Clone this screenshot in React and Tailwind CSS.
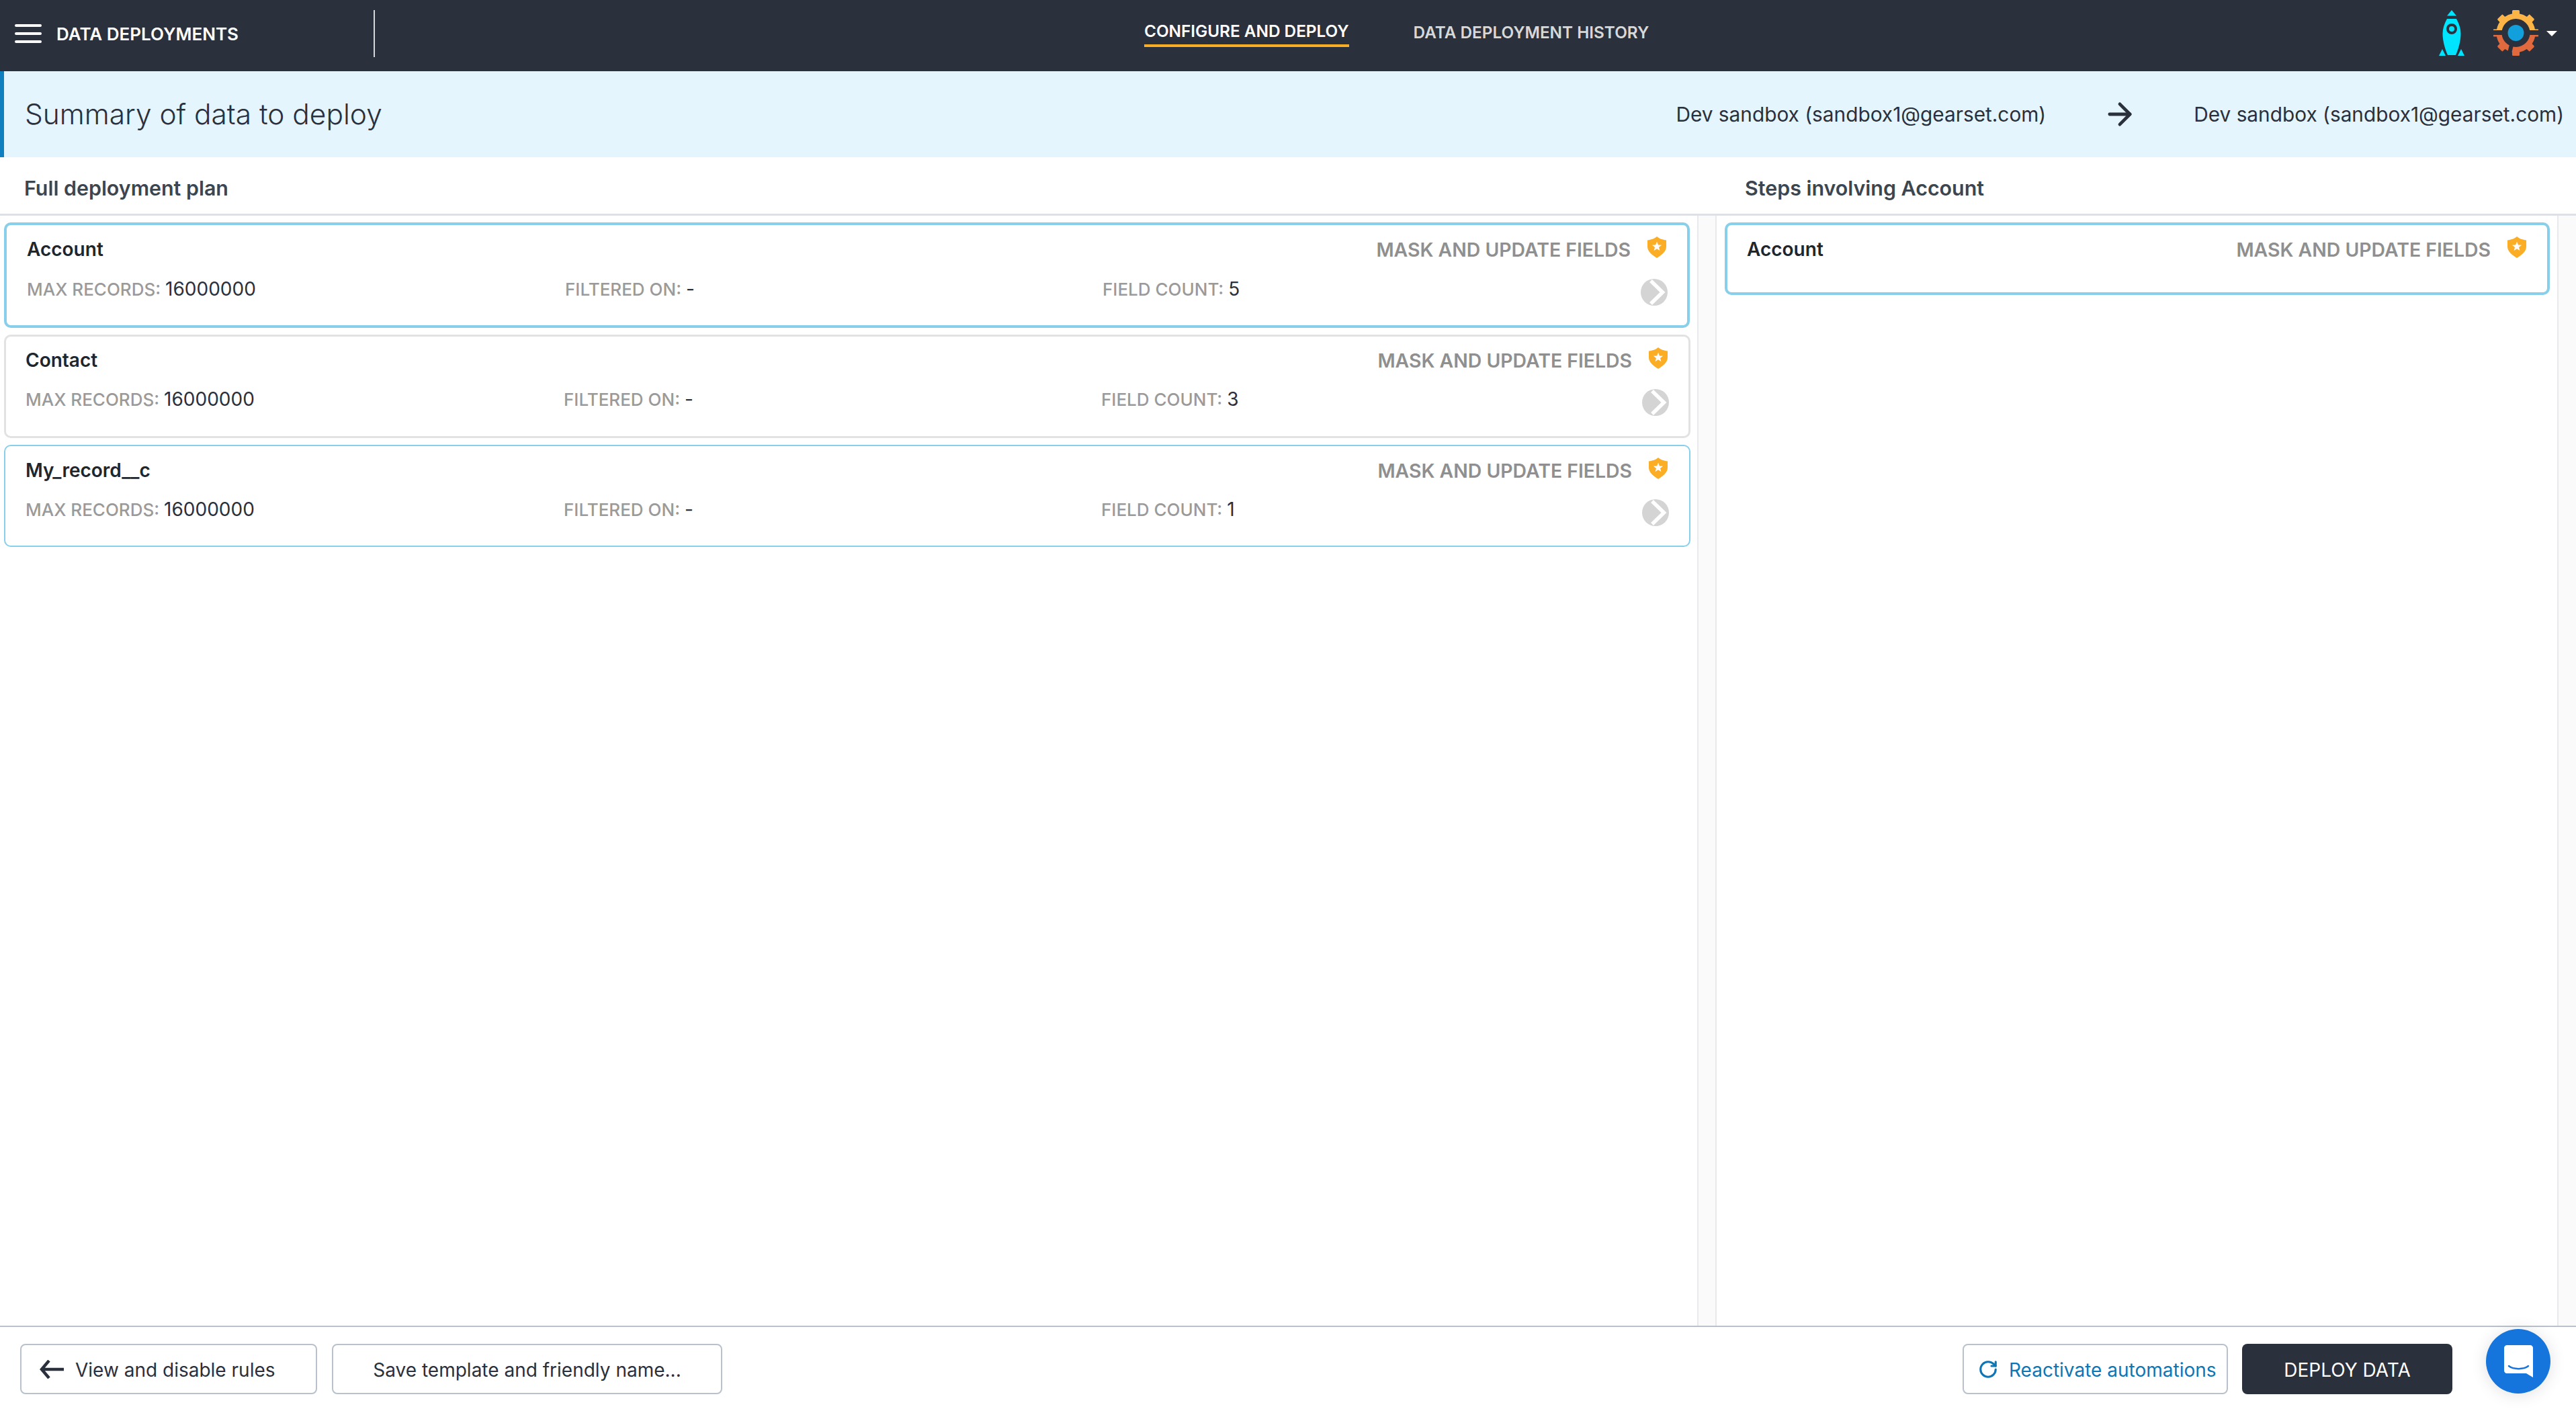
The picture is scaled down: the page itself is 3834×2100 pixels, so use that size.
import { ArrowRight, RotateCw } from 'lucide-react';

const steps = [
  { name: 'Account', count: 5, card: 'h-[157px] border-4 border-[#88cfec] pl-[30px] pr-[31px] pt-[16px]', row: 'mt-[16px]' },
  { name: 'Contact', count: 3, card: 'h-[154px] border-[3px] border-[#e2e2e2] pl-[29px] pr-[31px] pt-[15px] mr-[-1px]', row: 'mt-[15px]' },
  { name: 'My_record__c', count: 1, card: 'h-[152px] border-2 border-[#88cfec] pl-[30px] pr-[32px] pt-[16px] mr-[-1px]', row: 'mt-[15px]' },
];

const gearTeeth = [0, 45, 90, 135, 180, 225, 270, 315];

function Shield() {
  return (
    <svg viewBox="0 0 28 32" className="w-[28px] h-[32px] -translate-y-[3px]">
      <path d="M14 0 C11 3 5 5 0 5.500 L0 15 C0 23 8 28 14 32 C20 28 28 23 28 15 L28 5.500 C23 5 17 3 14 0 Z" fill="#fbad26" />
      <path d="M14 7.500 L15.900 12.400 L21.100 12.700 L17 16 L18.400 21 L14 18.200 L9.600 21 L11 16 L6.900 12.700 L12.100 12.400 Z" fill="#fff" />
    </svg>
  );
}

function Chevron() {
  return (
    <svg viewBox="0 0 40 40" className="w-[40px] h-[40px] translate-y-[5px] mr-[-2px]">
      <circle cx="20" cy="20" r="20" fill="#d4d4d4" />
      <path d="M15 3 L32.500 20 L15 37" fill="none" stroke="#fff" strokeWidth="5.500" />
    </svg>
  );
}

function Rocket() {
  return (
    <svg viewBox="0 0 38 68" className="w-[38px] h-[68px] mb-[2px]">
      <path d="M19 0 L26 8.500 L12 8.500 Z" fill="#00e5ff" />
      <path d="M12 13 L26 13 C30 20 32.500 28 32.500 35 C32.500 46 29 58 25 67 L13 67 C9 58 5.500 46 5.500 35 C5.500 28 8 20 12 13 Z" fill="#00e5ff" />
      <circle cx="19" cy="28" r="8" fill="#2a303c" />
      <circle cx="19" cy="28" r="4" fill="#00e5ff" />
      <path d="M5 58 L10 68 L0 68 Z" fill="#00e5ff" />
      <path d="M33 58 L38 68 L28 68 Z" fill="#00e5ff" />
    </svg>
  );
}

function GearHalf({ color, clip }) {
  return (
    <g clipPath={clip} fill={color}>
      <circle cx="33.500" cy="34" r="25" fill="none" stroke={color} strokeWidth="8" />
      {gearTeeth.map((deg) => (
        <rect key={deg} x="28" y="0" width="11" height="9" rx="1.500" transform={`rotate(${deg} 33.500 34)`} />
      ))}
    </g>
  );
}

function Gear() {
  return (
    <svg viewBox="0 0 67 68" className="w-[67px] h-[68px] mb-[2px]">
      <defs>
        <clipPath id="gear-top"><rect x="0" y="0" width="67" height="30" /></clipPath>
        <clipPath id="gear-bottom"><rect x="0" y="37" width="67" height="31" /></clipPath>
      </defs>
      <GearHalf color="#fdb446" clip="url(#gear-top)" />
      <GearHalf color="#e0693e" clip="url(#gear-bottom)" />
      <path d="M29 44 L23 68" stroke="#2a303c" strokeWidth="6" />
      <circle cx="33.500" cy="34" r="12" fill="#12a0dc" />
    </svg>
  );
}

function Chat() {
  return (
    <svg viewBox="0 0 43 48" className="w-[43px] h-[48px]">
      <path d="M4 0 L39 0 C41 0 43 2 43 4 L43 48 L33 42 L4 42 C2 42 0 40 0 38 L0 4 C0 2 2 0 4 0 Z" fill="#fff" />
      <path d="M7 31 C14 36.500 29 36.500 36 31" fill="none" stroke="#1675dc" strokeWidth="2.500" strokeLinecap="round" />
    </svg>
  );
}

function BackArrow() {
  return (
    <svg viewBox="0 0 37 28" className="w-[37px] h-[28px]">
      <path d="M37 14 L4 14 M15 1 L4 14 L15 27" fill="none" stroke="#2a303c" strokeWidth="4.500" />
    </svg>
  );
}

function StepHeading({ name }) {
  return (
    <div className="flex items-center justify-between h-[40px]">
      <span className="text-[28px] font-semibold text-[#20262e]">{name}</span>
      <div className="flex items-center gap-[25px]">
        <span className="mt-[3px] text-[28.4px] font-semibold text-[#8f8f8f]">MASK AND UPDATE FIELDS</span>
        <Shield />
      </div>
    </div>
  );
}

function Stat({ label, value }) {
  return (
    <div className="text-[26px] font-medium">
      <span className="text-[#9a9a9a]">{label}</span> <span className="text-[28px] font-normal text-[#2a303c]">{value}</span>
    </div>
  );
}

function StepCard({ step }) {
  return (
    <div className={`${step.card} rounded-[10px] flex flex-col bg-white`}>
      <StepHeading name={step.name} />
      <div className={`grid grid-cols-[801px_800px_1fr] items-center h-[46px] ${step.row}`}>
        <Stat label="MAX RECORDS:" value="16000000" />
        <Stat label="FILTERED ON:" value="-" />
        <div className="flex items-center justify-between">
          <Stat label="FIELD COUNT:" value={step.count} />
          <Chevron />
        </div>
      </div>
    </div>
  );
}

export default function App() {
  return (
    <div className="h-screen flex flex-col bg-white font-['Inter',sans-serif] text-[#2a303c] overflow-hidden">
      <header className="h-[106px] shrink-0 bg-[#2a303c] flex items-center pb-[6px]">
        <div className="w-[558px] h-[70px] flex items-center border-r-2 border-[#d5d7da] pl-[22px]">
          <div className="w-[40px] flex flex-col gap-[8px]">
            <div className="h-[4px] bg-white rounded-full" />
            <div className="h-[4px] bg-white rounded-full" />
            <div className="h-[4px] bg-white rounded-full" />
          </div>
          <span className="ml-[22px] text-[26px] font-semibold text-white">DATA DEPLOYMENTS</span>
        </div>
        <nav className="ml-[1145px] flex items-start gap-[96px] mt-[2px]">
          <div className="text-[24.3px] leading-[28px] font-semibold text-white border-b-4 border-[#fbad26] pb-[6px]">CONFIGURE AND DEPLOY</div>
          <div className="text-[24.3px] leading-[28px] font-semibold text-[#d8d8d8] mt-[2px]">DATA DEPLOYMENT HISTORY</div>
        </nav>
        <div className="ml-auto pr-[28px] flex items-center">
          <Rocket />
          <div className="w-[43px]" />
          <Gear />
          <div className="ml-[12px] w-0 h-0 border-l-[8px] border-r-[8px] border-t-[8px] border-l-transparent border-r-transparent border-t-white" />
        </div>
      </header>

      <section className="h-[128px] shrink-0 bg-[#e5f5fd] border-l-[6px] border-[#0f7fc0] flex items-center pl-[31px] pr-[18px]">
        <h1 className="text-[42.4px] font-light">Summary of data to deploy</h1>
        <div className="ml-auto flex items-center text-[29.8px]">
          <span>Dev sandbox (sandbox1@gearset.com)</span>
          <ArrowRight size={52} strokeWidth={2.2} className="mx-[84px]" />
          <span>Dev sandbox (sandbox1@gearset.com)</span>
        </div>
      </section>

      <div className="h-[87px] shrink-0 pt-[10px] border-b-[3px] border-[#dde0e4] flex items-center text-[30.4px] font-semibold text-[#3c4650]">
        <div className="w-[2597px] pl-[36px]">Full deployment plan</div>
        <div>Steps involving Account</div>
      </div>

      <main className="flex-1 flex min-h-0">
        <div className="w-[2526px] pl-[6px] pr-[11px] pt-[10px] flex flex-col gap-[10px]">
          {steps.map((s) => <StepCard key={s.name} step={s} />)}
        </div>
        <div className="w-[29px] bg-[#fafafa] border-x-2 border-[#e9e9ec]" />
        <div className="w-[1251px] pl-[12px] pr-[11px] pt-[10px]">
          <div className="h-[108px] border-4 border-[#88cfec] rounded-[10px] pl-[29px] pr-[31px] pt-[16px]">
            <StepHeading name="Account" />
          </div>
        </div>
        <div className="flex-1 bg-[#fafafa] border-l-2 border-[#e9e9ec]" />
      </main>

      <footer className="h-[127px] shrink-0 border-t-2 border-[#b9c2cc] flex items-center pl-[30px] relative bg-white">
        <button className="w-[442px] h-[75px] border-2 border-[#b9c2cc] rounded-[8px] flex items-center pl-[26px] text-[28px]">
          <BackArrow />
          <span className="ml-[17px] pt-[3px]">View and disable rules</span>
        </button>
        <button className="ml-[22px] w-[581px] h-[75px] border-2 border-[#b9c2cc] rounded-[8px] text-[28px] pt-[3px]">Save template and friendly name...</button>
        <button className="ml-auto w-[395px] h-[75px] border-2 border-[#b9c2cc] rounded-[8px] flex items-center pl-[21px] gap-[16px] text-[28px] text-[#0e76b5]">
          <RotateCw size={30} strokeWidth={2.5} />
          <span className="pt-[3px]">Reactivate automations</span>
        </button>
        <button className="ml-[21px] w-[313px] h-[75px] bg-[#2a303c] rounded-[8px] text-[28px] text-white mr-[184px] pt-[3px]">DEPLOY DATA</button>
        <div className="absolute right-[38px] top-[3px] w-[96px] h-[96px] rounded-full bg-[#1675dc] shadow-[0_2px_24px_rgba(0,0,0,0.12)] flex items-center justify-center">
          <Chat />
        </div>
      </footer>
    </div>
  );
}
